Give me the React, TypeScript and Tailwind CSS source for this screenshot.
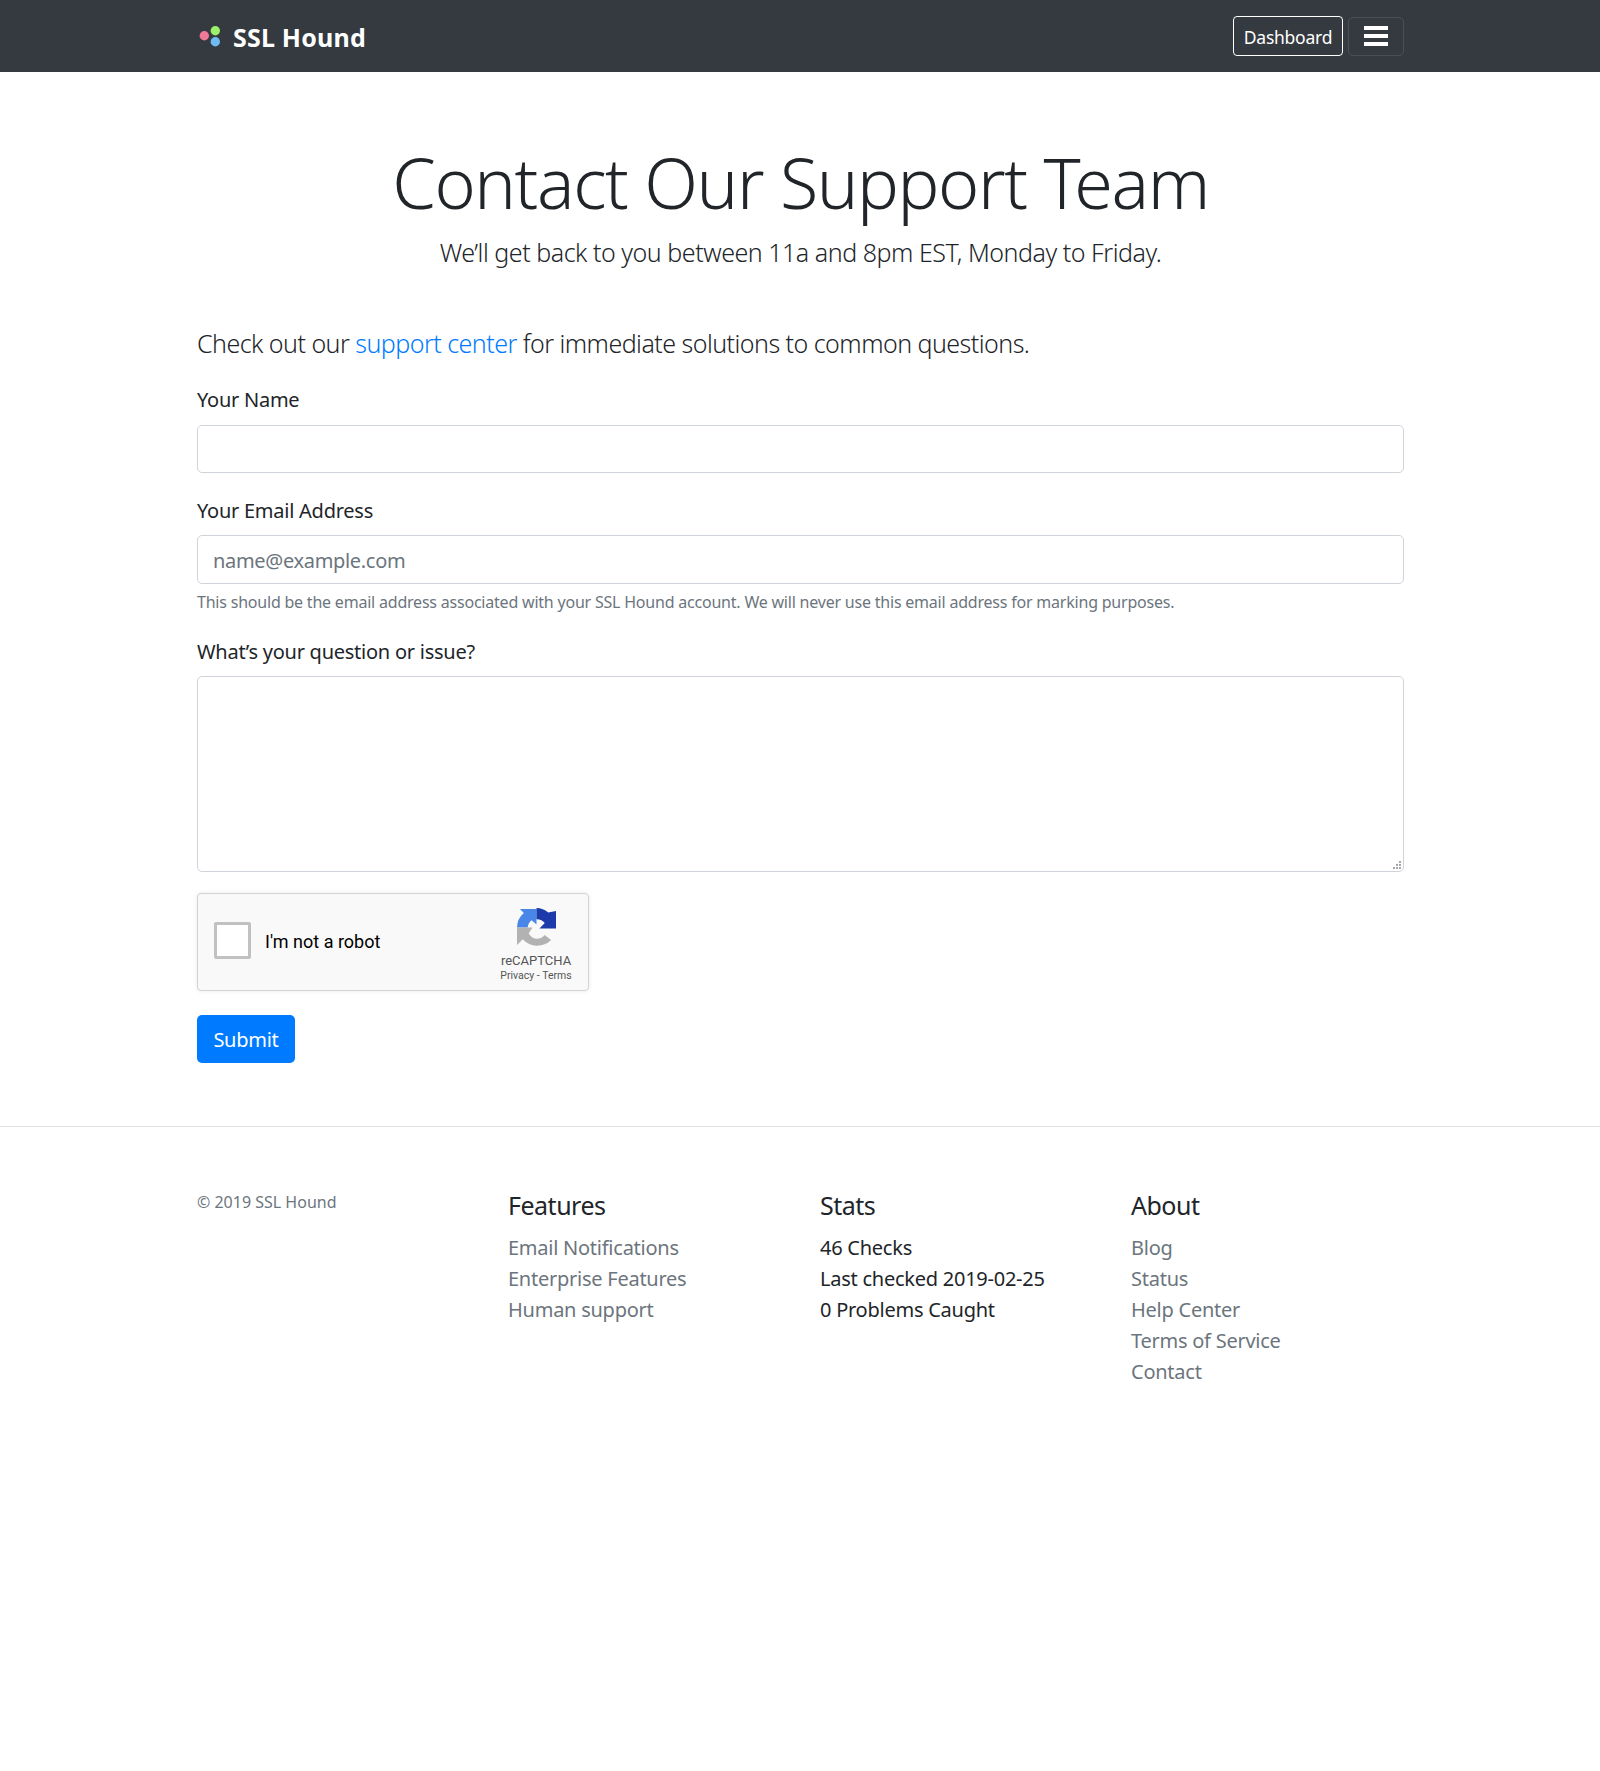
import React from 'react';

const linkClass = 'block text-[#6c757d] leading-[31px]';
const pageWidth = 'ml-[197px] w-[1207px]';

function Logo() {
  return (
    <svg width="24" height="24" viewBox="0 0 24 24" className="shrink-0">
      <circle cx="7.3" cy="11.7" r="4.7" fill="#ef7a97" />
      <circle cx="18.3" cy="6.7" r="4.7" fill="#9cf06a" />
      <circle cx="18.3" cy="17.7" r="4.7" fill="#6fbcf2" />
    </svg>
  );
}

function Recaptcha() {
  return (
    <div className="flex h-[98px] w-[392px] items-center rounded-[4px] border border-[#d3d3d3] bg-[#f9f9f9] pl-4 pr-[16px] shadow-[0_0_5px_rgba(0,0,0,0.08)]">
      <div className="mb-[4px] h-[37px] w-[37px] rounded-[2px] border-[3px] border-[#c1c1c1] bg-white" />
      <span className="ml-[14px] flex-1 font-['Roboto',sans-serif] text-[18px] tracking-normal text-black">I'm not a robot</span>
      <div className="flex h-full w-[72px] flex-col items-center pt-[14px]">
        <svg width="39" height="39" viewBox="0 0 40 40" className="shrink-0">
          <path d="M0 20 A20 20 0 0 1 7 5 L3 1 H20 V17 L15 12.5 A10 10 0 0 0 11 20 Z" fill="#4a86e8" />
          <path d="M20 0 A20 20 0 0 1 32 4.5 L40 3 V21 H23 L28.5 15.5 A10 10 0 0 0 20 11.5 Z" fill="#1c3aa9" />
          <path d="M0 20 H16 L12 26 A9.5 9.5 0 0 0 28.3 27.6 L35 32.8 A20 20 0 0 1 5.9 32 L0 38 Z" fill="#b2b2b2" />
        </svg>
        <span className="mt-[6px] font-['Roboto',sans-serif] text-[13px] leading-[15px] tracking-normal text-[#555]">reCAPTCHA</span>
        <span className="font-['Roboto',sans-serif] text-[10.5px] leading-[16px] tracking-normal text-[#555]">Privacy - Terms</span>
      </div>
    </div>
  );
}

export default function App() {
  return (
    <div className="min-h-[1771px] bg-white font-['Noto_Sans',sans-serif] text-[20px] leading-[30px] tracking-[-0.25px] text-[#212529]">
      <nav className="h-[72px] bg-[#343a40]">
        <div className={`flex h-full items-center justify-between ${pageWidth}`}>
          <div className="flex items-center gap-[12px]">
            <Logo />
            <span className="pt-[1px] text-[25px] font-bold tracking-[0.2px] text-white">SSL Hound</span>
          </div>
          <div className="flex items-center gap-[5px]">
            <button className="h-[40px] w-[110px] rounded-[4px] border border-white pt-[1px] text-[17.5px] tracking-[-0.25px] text-white">Dashboard</button>
            <button className="flex h-[39px] w-[56px] flex-col items-center justify-center gap-[4px] rounded-[5px] border border-white/10">
              <span className="h-[4px] w-[24px] bg-white" />
              <span className="h-[4px] w-[24px] bg-white" />
              <span className="h-[4px] w-[24px] bg-white" />
            </button>
          </div>
        </div>
      </nav>

      <main className={pageWidth}>
        <header className="pt-[60px] text-center">
          <h1 className="text-[70px] leading-[100px] font-light tracking-[-1.4px]">Contact Our Support Team</h1>
          <p className="mt-[2px] text-[25px] leading-[37px] font-light tracking-[-0.47px]">We’ll get back to you between 11a and 8pm EST, Monday to Friday.</p>
        </header>

        <p className="mt-[54px] text-[25px] leading-[37px] font-light tracking-[-0.53px]">
          Check out our <a className="text-[#007bff]">support center</a> for immediate solutions to common questions.
        </p>

        <form className="mt-[23px]">
          <label className="block leading-[30px]">Your Name</label>
          <input className="mt-[10px] block h-[48px] w-full rounded-[5px] border border-[#ced4da] px-4" />

          <label className="mt-[23px] block leading-[30px]">Your Email Address</label>
          <input placeholder="name@example.com" className="mt-[9px] block h-[49px] w-full rounded-[5px] border border-[#ced4da] px-[15px] pt-[2px] tracking-[-0.32px] placeholder:text-[#6c757d]" />
          <p className="mt-[6px] text-[16px] leading-[24px] tracking-[-0.21px] text-[#6c757d]">This should be the email address associated with your SSL Hound account. We will never use this email address for marking purposes.</p>

          <label className="mt-[23px] block leading-[30px]">What’s your question or issue?</label>
          <div className="relative mt-[9px]">
            <textarea className="block h-[196px] w-full resize-none rounded-[5px] border border-[#ced4da] px-4" />
            <svg width="10" height="10" viewBox="0 0 10 10" className="absolute right-[2px] bottom-[2px]" fill="#a8a8a8">
              <rect x="7" y="1" width="2" height="2" />
              <rect x="4" y="4" width="2" height="2" />
              <rect x="7" y="4" width="2" height="2" />
              <rect x="1" y="7" width="2" height="2" />
              <rect x="4" y="7" width="2" height="2" />
              <rect x="7" y="7" width="2" height="2" />
            </svg>
          </div>

          <div className="mt-[21px]">
            <Recaptcha />
          </div>

          <button type="button" className="mt-[24px] h-[48px] w-[98px] rounded-[5px] bg-[#007bff] pt-[2px] text-white">Submit</button>
        </form>
      </main>

      <footer className="mt-[63px] border-t border-[#e3e3e3] pt-[63px]">
        <div className={`grid grid-cols-[311px_312px_311px_1fr] ${pageWidth}`}>
          <small className="text-[16px] leading-[24px] tracking-normal text-[#6c757d]">© 2019 SSL Hound</small>
          <div>
            <h5 className="mb-[12px] text-[25px] leading-[30px] tracking-[-0.5px]">Features</h5>
            <a className={linkClass}>Email Notifications</a>
            <a className={linkClass}>Enterprise Features</a>
            <a className={linkClass}>Human support</a>
          </div>
          <div>
            <h5 className="mb-[12px] text-[25px] leading-[30px] tracking-[-0.5px]">Stats</h5>
            <div className="leading-[31px]">46 Checks</div>
            <div className="leading-[31px]">Last checked 2019-02-25</div>
            <div className="leading-[31px]">0 Problems Caught</div>
          </div>
          <div>
            <h5 className="mb-[12px] text-[25px] leading-[30px] tracking-[-0.5px]">About</h5>
            <a className={linkClass}>Blog</a>
            <a className={linkClass}>Status</a>
            <a className={linkClass}>Help Center</a>
            <a className={linkClass}>Terms of Service</a>
            <a className={linkClass}>Contact</a>
          </div>
        </div>
      </footer>
    </div>
  );
}
